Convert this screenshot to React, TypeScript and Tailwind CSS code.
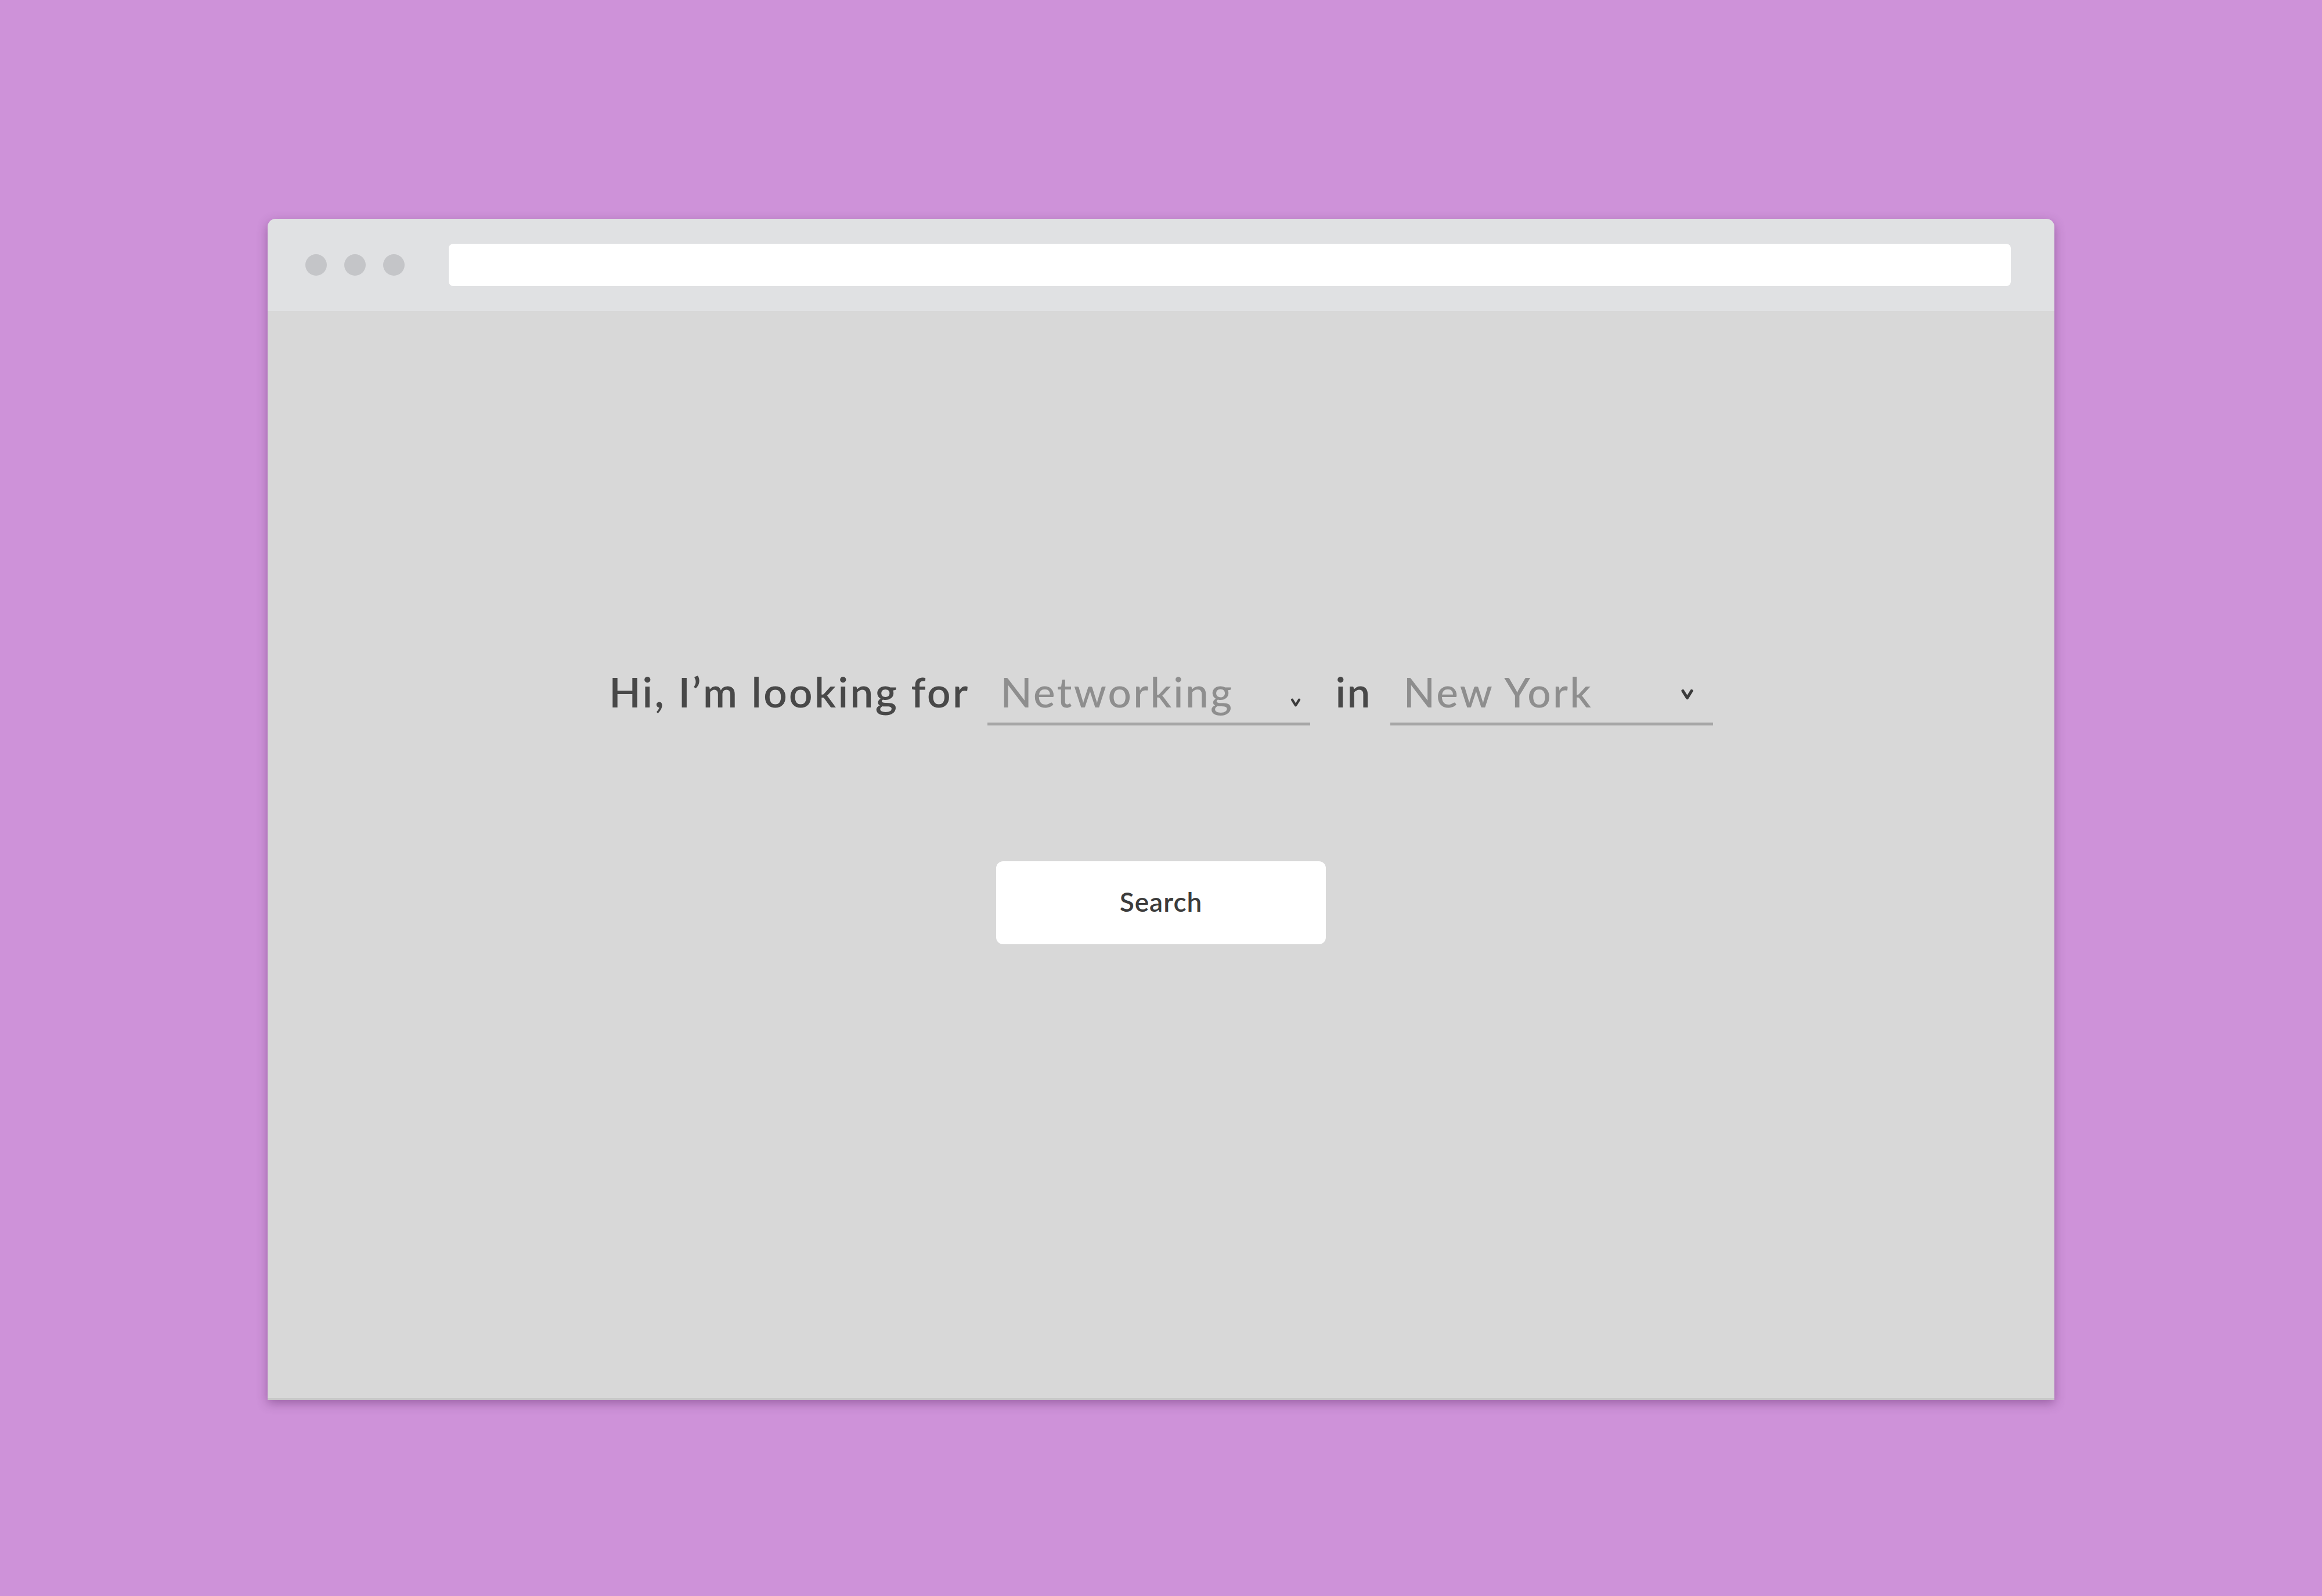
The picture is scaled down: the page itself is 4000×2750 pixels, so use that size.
import React from "react";

function Chevron({ className }: { className?: string }) {
  return (
    <svg viewBox="0 0 16 14" className={className} fill="none">
      <path d="M3 3 L8 11 L13 3" stroke="#3b3b3b" strokeWidth="3.4" strokeLinecap="round" strokeLinejoin="round" />
    </svg>
  );
}

function Dropdown({ value, chevronClass }: { value: string; chevronClass: string }) {
  return (
    <div className="flex w-[556px] items-baseline justify-between border-b-[5px] border-[#a6a6a6] pb-[11px] pl-[23px]">
      <span className="font-medium tracking-[3.3px] text-[#8e8e8e]">{value}</span>
      <Chevron className={chevronClass} />
    </div>
  );
}

export default function App() {
  return (
    <div className="flex h-[2750px] w-[4000px] justify-center bg-[#ce92d9] pt-[377px] font-['Lato',sans-serif]">
      <div className="h-[2035px] w-[3078px] overflow-hidden rounded-t-[14px] shadow-[0_6px_18px_rgba(90,40,100,0.45)]">
        {/* title bar */}
        <div className="flex h-[159px] items-center bg-[#e0e1e3] pl-[65px] pr-[75px]">
          <div className="flex gap-[30px]">
            <span className="h-[37px] w-[37px] rounded-full bg-[#c4c5c8]" />
            <span className="h-[37px] w-[37px] rounded-full bg-[#c4c5c8]" />
            <span className="h-[37px] w-[37px] rounded-full bg-[#c4c5c8]" />
          </div>
          <div className="ml-[76px] h-[73px] flex-1 rounded-[8px] bg-white" />
        </div>

        {/* page */}
        <div className="flex h-[1876px] flex-col items-center border-b-[3px] border-[#c8c8c8] bg-[#d8d8d8] pt-[614px]">
          <div className="flex items-baseline text-[71px] leading-[84px]">
            <span className="font-semibold tracking-[3.4px] text-[#484848]">Hi, I’m looking for</span>
            <div className="ml-[30px]">
              <Dropdown value="Networking" chevronClass="mr-[15px] h-[17px] w-[20px]" />
            </div>
            <span className="ml-[44px] mr-[32px] font-semibold tracking-[2.4px] text-[#484848]">in</span>
            <Dropdown value="New York" chevronClass="mr-[32px] h-[21px] w-[25px] -translate-y-[12px]" />
          </div>

          <button className="mt-[234px] flex h-[143px] w-[568px] items-center justify-center rounded-[12px] bg-white pb-[4px] text-[46px] font-semibold tracking-[1px] text-[#3c3c3c]">
            Search
          </button>
        </div>
      </div>
    </div>
  );
}
